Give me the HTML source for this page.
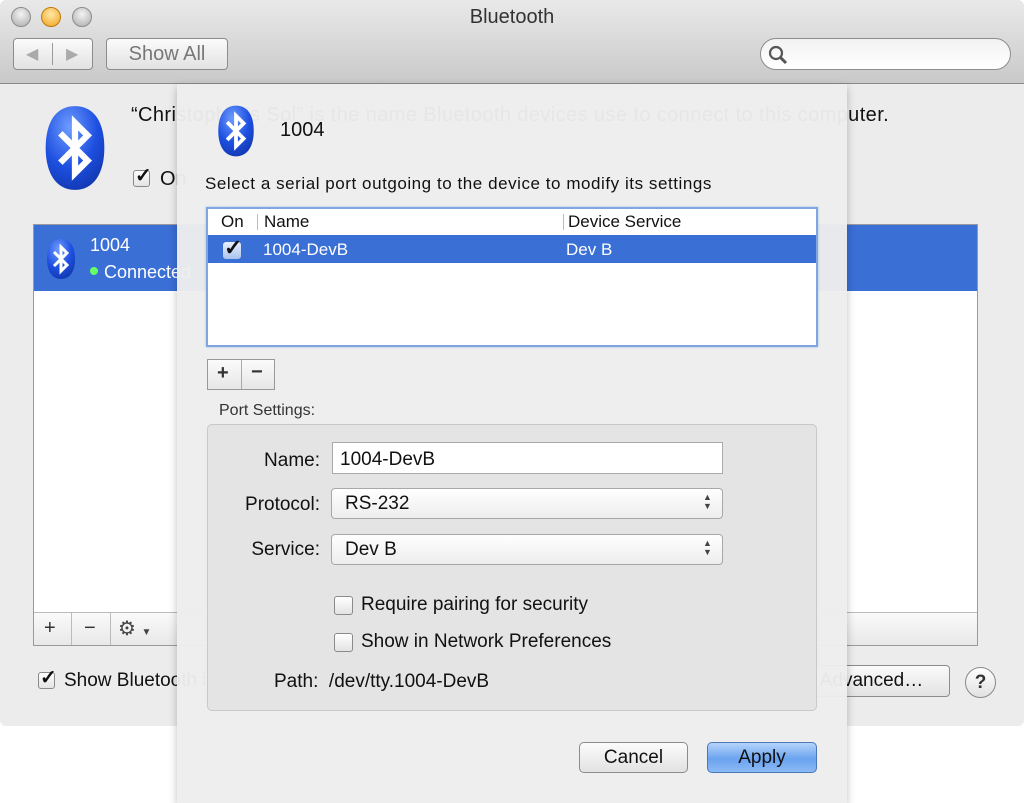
<!DOCTYPE html>
<html><head><meta charset="utf-8"><style>
*{margin:0;padding:0;box-sizing:border-box}
body{width:1024px;height:803px;background:#fff;font-family:"Liberation Sans",sans-serif;position:relative;overflow:hidden;color:#111}
.a{position:absolute}
.win{left:0;top:0;width:1024px;height:726px;background:#ececec;border-radius:6px;overflow:hidden}
.tb{left:0;top:0;width:1024px;height:84px;background:linear-gradient(#e9e9e9,#c9c9c9);border-bottom:1px solid #8a8a8a}
.light{width:20px;height:20px;border-radius:50%;top:7px;background:radial-gradient(circle at 50% 35%,#f4f4f4,#a9a9a9);border:1px solid #8d8d8d}
.btn{border:1px solid #8c8c8c;border-radius:4px;background:linear-gradient(#fbfbfb,#e2e2e2)}
.t{white-space:nowrap}
.cb{width:17px;height:17px;border:1px solid #8a8a8a;border-radius:3px;background:linear-gradient(#fff,#e3e3e3)}
.ck{font-size:20px;line-height:17px;font-weight:bold;color:#111}
.sheet{left:177px;top:84px;width:670px;height:719px;background:rgba(237,237,237,0.97);box-shadow:0 3px 8px rgba(0,0,0,.25)}
.pop{border:1px solid #a8a8a8;border-radius:4px;background:linear-gradient(#fff,#ededed);height:31px}
</style></head><body>
<svg width="0" height="0" style="position:absolute"><defs>
<symbol id="bt" viewBox="0 0 60 84"><defs><radialGradient id="g" cx="40%" cy="25%" r="80%"><stop offset="0" stop-color="#6e9bff"/><stop offset=".6" stop-color="#1d4fe0"/><stop offset="1" stop-color="#1238b0"/></radialGradient></defs>
<path d="M30 2C50 2 58 20 58 42C58 66 48 82 30 82C12 82 2 66 2 42C2 20 10 2 30 2Z" fill="url(#g)"/>
<path d="M16 28L42 54L30 66V18L42 30L16 56" fill="none" stroke="#fff" stroke-width="6" stroke-linejoin="miter"/></symbol>
</defs></svg>

<div class="a win">
 <div class="a tb">
  <div class="a light" style="left:11px"></div>
  <div class="a light" style="left:41px;background:radial-gradient(circle at 50% 35%,#ffe9a8,#f0a21a);border-color:#c07a10"></div>
  <div class="a light" style="left:72px"></div>
  <div class="a t" style="left:0;width:1024px;text-align:center;top:6px;font-size:20px;color:#333">Bluetooth</div>
  <div class="a btn" style="left:13px;top:38px;width:80px;height:32px"><span class="a" style="left:38px;top:4px;width:1px;height:22px;background:#999"></span><span class="a" style="left:12px;top:5px;color:#aaa;font-size:16px">◀</span><span class="a" style="left:52px;top:5px;color:#aaa;font-size:16px">▶</span></div>
  <div class="a btn t" style="left:106px;top:38px;width:122px;height:32px;font-size:20px;color:#777;text-align:center;line-height:30px">Show All</div>
  <div class="a" style="left:760px;top:38px;width:251px;height:32px;border:1px solid #8d8d8d;border-radius:16px;background:linear-gradient(#f2f2f2,#fff)"><svg class="a" style="left:6px;top:5px" width="22" height="22"><circle cx="9" cy="9" r="6" fill="none" stroke="#555" stroke-width="2.2"/><path d="M13 13L19 19" stroke="#555" stroke-width="3"/></svg></div>
 </div>
 <svg class="a" style="left:42px;top:104px" width="66" height="88"><use href="#bt"/></svg>
 <div class="a t" style="left:131px;top:104px;font-size:20px;letter-spacing:.4px">“Christopher's Sol” is the name Bluetooth devices use to connect to this computer.</div>
 <div class="a cb" style="left:133px;top:170px"></div><div class="a ck" style="left:135px;top:168px">✓</div>
 <div class="a t" style="left:160px;top:168px;font-size:20px">On</div>
 <div class="a" style="left:33px;top:224px;width:945px;height:422px;background:#fff;border:1px solid #9a9a9a">
  <div class="a" style="left:0;top:0;width:943px;height:66px;background:#3a6fd6"></div>
  <svg class="a" style="left:12px;top:13px" width="30" height="42"><use href="#bt"/></svg>
  <div class="a t" style="left:56px;top:10px;font-size:18px;color:#fff">1004</div>
  <div class="a" style="left:56px;top:42px;width:8px;height:8px;border-radius:50%;background:#6f6"></div>
  <div class="a t" style="left:70px;top:37px;font-size:18px;color:#fff">Connected</div>
  <div class="a" style="left:0;top:387px;width:943px;height:33px;background:linear-gradient(#fafafa,#e8e8e8);border-top:1px solid #bbb"></div>
  <div class="a t" style="left:10px;top:392px;font-size:20px;color:#333">+</div>
  <div class="a" style="left:37px;top:388px;width:1px;height:32px;background:#bbb"></div>
  <div class="a t" style="left:50px;top:392px;font-size:20px;color:#333">−</div>
  <div class="a" style="left:76px;top:388px;width:1px;height:32px;background:#bbb"></div>
  <div class="a t" style="left:84px;top:391px;font-size:20px;color:#444">⚙ <span style="font-size:10px">▼</span></div>
 </div>
 <div class="a cb" style="left:38px;top:672px"></div><div class="a ck" style="left:40px;top:670px">✓</div>
 <div class="a t" style="left:64px;top:670px;font-size:19px">Show Bluetooth in menu bar</div>
 <div class="a btn t" style="left:580px;top:665px;width:190px;height:32px;font-size:19px;text-align:center;line-height:30px;color:#999">Sharing Setup…</div>
 <div class="a btn t" style="left:793px;top:665px;width:157px;height:32px;font-size:19px;text-align:center;line-height:30px">Advanced…</div>
 <div class="a" style="left:965px;top:667px;width:31px;height:31px;border-radius:50%;border:1px solid #888;background:linear-gradient(#fff,#e2e2e2);text-align:center;font-size:19px;font-weight:bold;line-height:29px;color:#333">?</div>
</div>

<div class="a sheet">
 <svg class="a" style="left:40px;top:20px" width="38" height="54"><use href="#bt"/></svg>
 <div class="a t" style="left:103px;top:35px;font-size:20px">1004</div>
 <div class="a t" style="left:28px;top:90px;font-size:17px;letter-spacing:.55px">Select a serial port outgoing to the device to modify its settings</div>
 <div class="a" style="left:29px;top:123px;width:612px;height:140px;background:#fff;border:2px solid #7ea7e0;box-shadow:0 0 2px #9bbbe8">
  <div class="a t" style="left:13px;top:3px;font-size:17px">On</div>
  <div class="a" style="left:49px;top:5px;width:1px;height:16px;background:#bbb"></div>
  <div class="a t" style="left:56px;top:3px;font-size:17px">Name</div>
  <div class="a" style="left:355px;top:5px;width:1px;height:16px;background:#bbb"></div>
  <div class="a t" style="left:360px;top:3px;font-size:17px">Device Service</div>
  <div class="a" style="left:0;top:26px;width:608px;height:28px;background:#3a6fd6"></div>
  <div class="a" style="left:15px;top:33px;width:18px;height:17px;border-radius:3px;background:linear-gradient(#e8f0ff,#a9c3ee)"></div>
  <div class="a ck" style="left:16px;top:30px;font-size:22px">✓</div>
  <div class="a t" style="left:55px;top:31px;font-size:17px;color:#fff">1004-DevB</div>
  <div class="a t" style="left:358px;top:31px;font-size:17px;color:#fff">Dev B</div>
 </div>
 <div class="a" style="left:30px;top:275px;width:68px;height:31px;border:1px solid #999;background:linear-gradient(#fbfbfb,#e6e6e6)">
  <div class="a" style="left:33px;top:0;width:1px;height:29px;background:#aaa"></div>
  <div class="a t" style="left:9px;top:2px;font-size:20px;font-weight:bold;color:#333">+</div>
  <div class="a t" style="left:43px;top:1px;font-size:20px;font-weight:bold;color:#333">−</div>
 </div>
 <div class="a t" style="left:42px;top:318px;font-size:16px;color:#333">Port Settings:</div>
 <div class="a" style="left:30px;top:340px;width:610px;height:287px;border:1px solid #c8c8c8;border-radius:5px;background:#e4e4e4"></div>
 <div class="a t" style="left:0;width:143px;text-align:right;top:366px;font-size:19px">Name:</div>
 <div class="a" style="left:155px;top:358px;width:391px;height:32px;background:#fff;border:1px solid #aaa"></div>
 <div class="a t" style="left:163px;top:365px;font-size:19px">1004-DevB</div>
 <div class="a t" style="left:0;width:143px;text-align:right;top:410px;font-size:19px">Protocol:</div>
 <div class="a pop" style="left:154px;top:404px;width:392px"></div>
 <div class="a t" style="left:168px;top:409px;font-size:19px">RS-232</div>
 <div class="a t" style="left:526px;top:409px;font-size:9px;line-height:9px;color:#444">▲<br>▼</div>
 <div class="a t" style="left:0;width:143px;text-align:right;top:455px;font-size:19px">Service:</div>
 <div class="a pop" style="left:154px;top:450px;width:392px"></div>
 <div class="a t" style="left:168px;top:455px;font-size:19px">Dev B</div>
 <div class="a t" style="left:526px;top:455px;font-size:9px;line-height:9px;color:#444">▲<br>▼</div>
 <div class="a cb" style="left:157px;top:512px;width:19px;height:19px"></div>
 <div class="a t" style="left:184px;top:510px;font-size:19px">Require pairing for security</div>
 <div class="a cb" style="left:157px;top:549px;width:19px;height:19px"></div>
 <div class="a t" style="left:184px;top:547px;font-size:19px">Show in Network Preferences</div>
 <div class="a t" style="left:97px;top:587px;font-size:19px">Path:&nbsp; /dev/tty.1004-DevB</div>
 <div class="a btn t" style="left:402px;top:658px;width:109px;height:31px;font-size:19px;text-align:center;line-height:29px;border-radius:5px">Cancel</div>
 <div class="a t" style="left:530px;top:658px;width:110px;height:31px;font-size:19px;text-align:center;line-height:29px;border-radius:5px;border:1px solid #4a78b8;background:linear-gradient(#b5d3fb,#6aa3ef 55%,#8cbaf5)">Apply</div>
</div>
</body></html>
